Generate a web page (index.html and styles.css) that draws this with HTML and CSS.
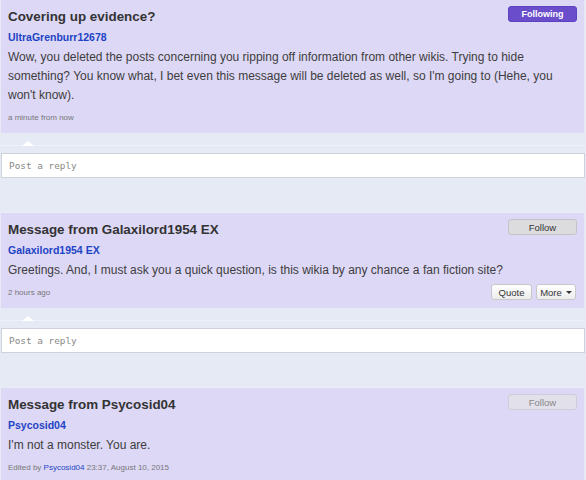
FILE: index.html
```html
<!DOCTYPE html>
<html lang="en">
<head>
    <meta charset="UTF-8">
    <meta name="viewport" content="width=device-width, initial-scale=1.0">
    <title>Message Wall</title>
    <link rel="stylesheet" href="styles.css">
</head>
<body>
    <div class="wall">
        <div class="thread">
            <div class="message">
                <div class="message-head">
                    <h2>Covering up evidence?</h2>
                    <button class="follow following">Following</button>
                </div>
                <a class="user" href="#">UltraGrenburr12678</a>
                <p class="text">Wow, you deleted the posts concerning you ripping off information from other wikis. Trying to hide something? You know what, I bet even this message will be deleted as well, so I'm going to (Hehe, you won't know).</p>
                <div class="message-foot">
                    <span class="time">a minute from now</span>
                </div>
            </div>
            <div class="reply">
                <span class="arrow"></span>
                <input type="text" placeholder="Post a reply">
            </div>
        </div>

        <div class="thread">
            <div class="message">
                <div class="message-head">
                    <h2>Message from Galaxilord1954 EX</h2>
                    <button class="follow">Follow</button>
                </div>
                <a class="user" href="#">Galaxilord1954 EX</a>
                <p class="text">Greetings. And, I must ask you a quick question, is this wikia by any chance a fan fiction site?</p>
                <div class="message-foot">
                    <span class="time">2 hours ago</span>
                    <div class="actions">
                        <button class="small quote">Quote</button>
                        <button class="small more">More <span class="caret"></span></button>
                    </div>
                </div>
            </div>
            <div class="reply">
                <span class="arrow"></span>
                <input type="text" placeholder="Post a reply">
            </div>
        </div>

        <div class="thread">
            <div class="message">
                <div class="message-head">
                    <h2>Message from Psycosid04</h2>
                    <button class="follow" disabled>Follow</button>
                </div>
                <a class="user" href="#">Psycosid04</a>
                <p class="text">I'm not a monster. You are.</p>
                <div class="message-foot">
                    <span class="time">Edited by <a href="#">Psycosid04</a> 23:37, August 10, 2015</span>
                </div>
            </div>
        </div>
    </div>
</body>
</html>
```

FILE: styles.css
```css
body {
    margin: 0;
    padding: 0;
    background-color: #e5eaf5;
    font-family: "Liberation Sans", Arial, sans-serif;
    color: #333;
    overflow: hidden;
}

.wall {
    padding: 0 1px;
}

.message {
    background-color: #ddd8f6;
    padding: 7px 7px 8px 7px;
    margin-right: 1px;
}

.message-head {
    display: flex;
    justify-content: space-between;
    align-items: flex-start;
}

h2 {
    margin: 0;
    font-size: 13.4px;
    line-height: 19px;
    font-weight: bold;
    color: #333;
}

.follow {
    margin-top: -1px;
    width: 69px;
    height: 16px;
    padding: 0;
    font-family: inherit;
    font-size: 9.5px;
    color: #333;
    background-color: #dcdcdf;
    border: 1px solid #c4c4c8;
    border-radius: 3px;
}

.follow.following {
    background-color: #6a4dcb;
    border-color: #5d42bf;
    color: #fff;
    font-weight: bold;
    font-size: 9px;
}

.follow:disabled {
    background-color: #e2e0ea;
    border-color: #cfcdd8;
    color: #888;
}

.user {
    display: block;
    margin-top: 3px;
    font-size: 10.5px;
    line-height: 16px;
    font-weight: bold;
    color: #1d44c4;
    text-decoration: none;
}

.text {
    margin: 3px 0 0 0;
    font-size: 12px;
    line-height: 19px;
    color: #3d3d3d;
}

.message-foot {
    display: flex;
    justify-content: space-between;
    align-items: center;
    height: 16px;
    margin-top: 4px;
}

.time {
    font-size: 8px;
    color: #777;
}

.time a {
    color: #1d44c4;
    text-decoration: none;
}

.actions {
    display: flex;
    gap: 4px;
    margin-right: 1px;
}

.small {
    display: flex;
    align-items: center;
    justify-content: center;
    height: 16px;
    padding: 0;
    font-family: inherit;
    font-size: 9.5px;
    color: #333;
    white-space: nowrap;
    background: linear-gradient(#ffffff, #ececec);
    border: 1px solid #c8c8cc;
    border-radius: 3px;
}

.quote {
    width: 41px;
}

.more {
    width: 40px;
}

.caret {
    display: inline-block;
    margin-left: 4px;
    border-left: 3px solid transparent;
    border-right: 3px solid transparent;
    border-top: 3px solid #333;
}

.reply {
    position: relative;
    padding-top: 20px;
    padding-bottom: 34px;
    border-bottom: 1px solid #eaedf6;
}

.reply::before {
    content: "";
    position: absolute;
    left: -1px;
    right: 0;
    top: 12px;
    border-top: 1px solid #eef1f8;
}

.arrow {
    position: absolute;
    left: 21px;
    top: 8px;
    border-left: 6px solid transparent;
    border-right: 6px solid transparent;
    border-bottom: 5px solid #fff;
}

.reply input {
    display: block;
    box-sizing: border-box;
    width: 100%;
    height: 25px;
    margin: 0;
    padding: 0 7px;
    font-family: "DejaVu Sans Mono", "Liberation Mono", monospace;
    font-size: 9.4px;
    background: #fff;
    border: 1px solid #cfd2da;
    outline: none;
}

.reply input::placeholder {
    color: #888;
}
```
